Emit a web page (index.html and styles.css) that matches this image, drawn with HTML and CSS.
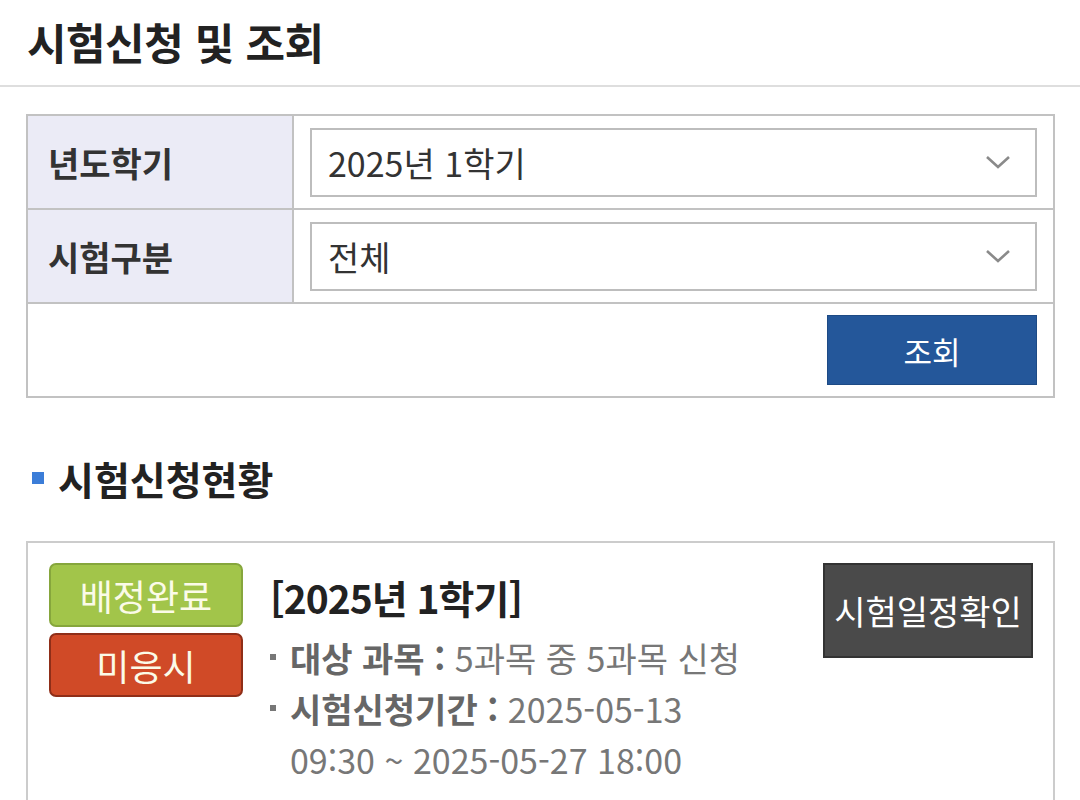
FILE: index.html
```html
<!DOCTYPE html>
<html lang="ko">
<head>
  <meta charset="UTF-8" />
  <meta name="viewport" content="width=device-width, initial-scale=1.0" />
  <title>시험신청 및 조회</title>
  <link rel="stylesheet" href="styles.css">
</head>
<body>
  <header class="page-head">
    <h1>시험신청 및 조회</h1>
  </header>

  <div class="search">
    <div class="search-row">
      <div class="search-label">년도학기</div>
      <div class="search-field">
        <div class="select">
          <span>2025년 1학기</span>
          <svg class="chevron" width="26" height="14" viewBox="0 0 26 14"><path d="M2 2 L13 12 L24 2" fill="none" stroke="#8a8a8a" stroke-width="2.6"/></svg>
        </div>
      </div>
    </div>
    <div class="search-row">
      <div class="search-label">시험구분</div>
      <div class="search-field">
        <div class="select">
          <span>전체</span>
          <svg class="chevron" width="26" height="14" viewBox="0 0 26 14"><path d="M2 2 L13 12 L24 2" fill="none" stroke="#8a8a8a" stroke-width="2.6"/></svg>
        </div>
      </div>
    </div>
    <div class="search-row search-actions">
      <button class="btn-search">조회</button>
    </div>
  </div>

  <h2 class="section-title">시험신청현황</h2>

  <div class="card">
    <div class="badges">
      <span class="badge badge-green">배정완료</span>
      <span class="badge badge-red">미응시</span>
    </div>
    <div class="card-info">
      <p class="card-title">[2025년 1학기]</p>
      <ul class="info-list">
        <li><b>대상 과목 :</b> 5과목 중 5과목 신청</li>
        <li><b>시험신청기간 :</b> 2025-05-13 09:30 ~ 2025-05-27 18:00</li>
      </ul>
    </div>
    <button class="btn-schedule">시험일정확인</button>
  </div>
</body>
</html>
```

FILE: styles.css
```css
body {
  margin: 0;
  font-family: "Noto Sans CJK KR", "Noto Sans", sans-serif;
  color: #333;
  background: #fff;
}
.page-head {
  height: 85px;
  border-bottom: 2px solid #dedede;
  display: flex;
  align-items: center;
  padding-left: 27px;
}
.page-head h1 {
  margin: 0 0 4px;
  font-size: 43px;
  font-weight: bold;
  color: #222;
  letter-spacing: -0.5px;
}
.search {
  margin: 27px 25px 0 26px;
  border: 2px solid #c2c2c2;
}
.search-row {
  display: flex;
  height: 92px;
  border-bottom: 2px solid #c2c2c2;
}
.search-row:last-child {
  border-bottom: none;
}
.search-label {
  width: 244px;
  padding-left: 20px;
  background: #ebebf6;
  border-right: 2px solid #c2c2c2;
  display: flex;
  align-items: center;
  font-size: 34px;
  font-weight: bold;
  color: #333;
}
.search-field {
  flex: 1;
  padding: 0 16px;
  display: flex;
  align-items: center;
}
.select {
  flex: 1;
  height: 65px;
  border: 2px solid #bdbdbd;
  display: flex;
  align-items: center;
  justify-content: space-between;
  padding: 0 24px 0 16px;
  font-size: 34px;
  color: #333;
}
.chevron {
  display: block;
}
.search-actions {
  justify-content: flex-end;
  align-items: center;
  padding-right: 16px;
}
.btn-search {
  width: 210px;
  height: 70px;
  border: 1px solid #1d4a85;
  background: #24579a;
  color: #fff;
  font-family: inherit;
  font-size: 31px;
  cursor: pointer;
}
.section-title {
  margin: 56px 0 0 32px;
  font-size: 39px;
  font-weight: bold;
  color: #222;
  display: flex;
  align-items: center;
  line-height: 48px;
}
.section-title::before {
  content: "";
  width: 12px;
  height: 12px;
  background: #3b7dd8;
  margin-right: 14px;
}
.card {
  margin: 39px 25px 0 26px;
  border: 2px solid #cccccc;
  border-bottom: none;
  padding: 20px 20px 40px 21px;
  display: flex;
  align-items: flex-start;
}
.badges {
  display: flex;
  flex-direction: column;
  gap: 6px;
  width: 194px;
}
.badge {
  height: 60px;
  border-radius: 7px;
  display: flex;
  align-items: center;
  justify-content: center;
  font-size: 36px;
  color: #fbfbe8;
}
.badge-green {
  background: #a2c54a;
  border: 2px solid #86a63c;
}
.badge-red {
  background: #d04a27;
  border: 2px solid #8f2e18;
}
.card-info {
  flex: 1;
  padding: 0 70px 0 27px;
}
.card-title {
  margin: 8px 0 0;
  font-size: 39px;
  font-weight: bold;
  color: #222;
  line-height: 52px;
  letter-spacing: -1px;
}
.info-list {
  list-style: none;
  margin: 9px 0 0;
  padding: 0 0 0 20px;
  font-size: 34px;
  line-height: 51px;
  color: #777;
}
.info-list li {
  text-indent: -20px;
}
.info-list li::before {
  content: "";
  display: inline-block;
  width: 6px;
  height: 6px;
  background: #777;
  margin-right: 14px;
  vertical-align: 0.35em;
}
.info-list b {
  color: #666;
}
.btn-schedule {
  width: 210px;
  height: 95px;
  background: #4a4a4a;
  border: 2px solid #333;
  color: #fff;
  font-family: inherit;
  font-size: 34px;
  cursor: pointer;
}
```
